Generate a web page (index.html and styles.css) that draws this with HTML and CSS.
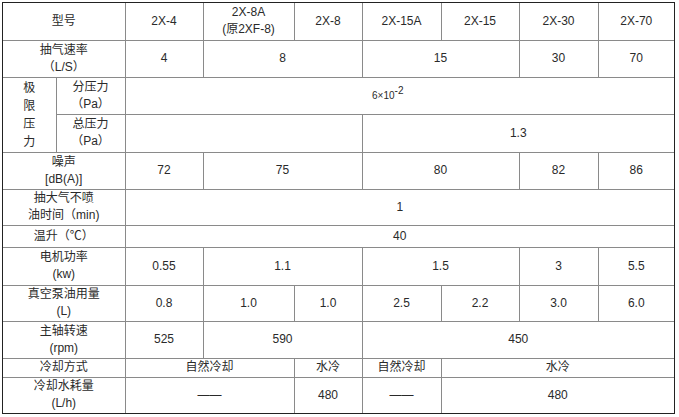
FILE: index.html
```html
<!DOCTYPE html>
<html lang="zh">
<head>
<meta charset="utf-8">
<title>2X 旋片式真空泵参数</title>
<link rel="stylesheet" href="styles.css">
</head>
<body>
<div class="frame">
<table class="spec">
<colgroup>
<col class="w53"><col class="w69"><col class="w78"><col class="w91"><col class="w68"><col class="w79"><col class="w78"><col class="w79"><col class="w76">
</colgroup>
<tbody>
<tr class="h37"><td colspan="2">型号</td><td>2X-4</td><td>2X-8A<br>(原2XF-8)</td><td>2X-8</td><td>2X-15A</td><td>2X-15</td><td>2X-30</td><td>2X-70</td></tr>
<tr class="h37"><td colspan="2">抽气速率<br>（L/S）</td><td>4</td><td colspan="2">8</td><td colspan="2">15</td><td>30</td><td>70</td></tr>
<tr class="h37"><td rowspan="2" class="vert">极<br>限<br>压<br>力</td><td>分压力<br>（Pa）</td><td colspan="7" class="sci"><span class="small">6×10<sup>-2</sup></span></td></tr>
<tr class="h38"><td>总压力<br>（Pa）</td><td colspan="3"></td><td colspan="4">1.3</td></tr>
<tr class="h37"><td colspan="2">噪声<br>[dB(A)]</td><td>72</td><td colspan="2">75</td><td colspan="2">80</td><td>82</td><td>86</td></tr>
<tr class="h36"><td colspan="2">抽大气不喷<br>油时间（min)</td><td colspan="7">1</td></tr>
<tr class="h22"><td colspan="2">温升（℃）</td><td colspan="7">40</td></tr>
<tr class="h38"><td colspan="2">电机功率<br>(kw)</td><td>0.55</td><td colspan="2">1.1</td><td colspan="2">1.5</td><td>3</td><td>5.5</td></tr>
<tr class="h36"><td colspan="2">真空泵油用量<br>(L)</td><td>0.8</td><td>1.0</td><td>1.0</td><td>2.5</td><td>2.2</td><td>3.0</td><td>6.0</td></tr>
<tr class="h37"><td colspan="2">主轴转速<br>(rpm)</td><td>525</td><td colspan="2">590</td><td colspan="4">450</td></tr>
<tr class="h19"><td colspan="2">冷却方式</td><td colspan="2">自然冷却</td><td>水冷</td><td>自然冷却</td><td colspan="3">水冷</td></tr>
<tr class="h36"><td colspan="2">冷却水耗量<br>(L/h)</td><td colspan="2">——</td><td>480</td><td>——</td><td colspan="3">480</td></tr>
</tbody>
</table>
</div>
</body>
</html>
```

FILE: styles.css
```css
html, body {
  margin: 0;
  padding: 0;
  background: #ffffff;
}

body {
  padding: 2px 0 0 2px;
  font-family: "Liberation Sans", "Noto Sans CJK SC", Arial, sans-serif;
  font-size: 12px;
  color: #2a2a2a;
}

.frame {
  display: inline-block;
  border: 1px solid #222222;
}

.spec {
  border-collapse: collapse;
  border-style: hidden;
  table-layout: fixed;
  width: 671px;
}

.spec td {
  border: 1px solid #8a8a8a;
  padding: 0;
  text-align: center;
  vertical-align: middle;
  line-height: 17px;
  white-space: nowrap;
}

.w53 { width: 53px; }
.w69 { width: 69px; }
.w78 { width: 78px; }
.w91 { width: 91px; }
.w68 { width: 68px; }
.w79 { width: 79px; }
.w76 { width: 76px; }

.h37 { height: 37px; }
.h38 { height: 38px; }
.h36 { height: 36px; }
.h22 { height: 22px; }
.h19 { height: 19px; }

.spec td.vert {
  line-height: 18px;
}

.spec td.sci {
  padding-right: 24px;
}

.small {
  font-size: 10px;
}

.small sup {
  font-size: 10px;
  vertical-align: 5px;
  line-height: 0;
}
```
